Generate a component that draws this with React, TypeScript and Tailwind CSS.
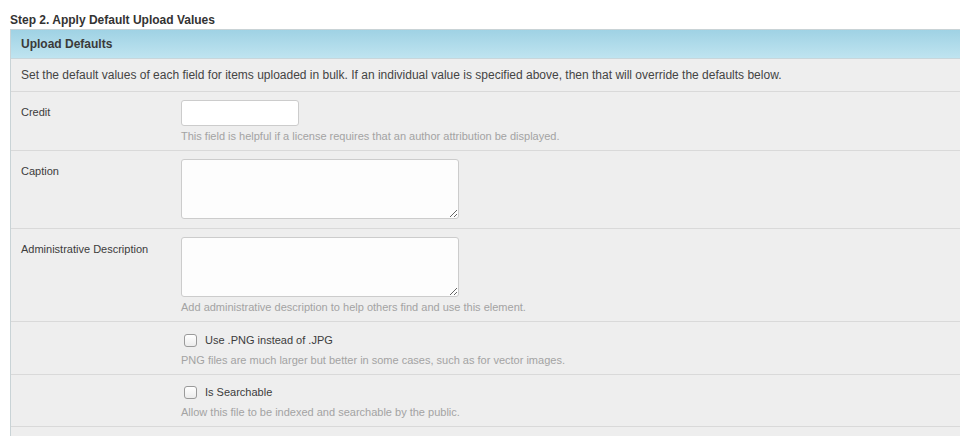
import React from 'react';

const font = { fontFamily: '"Liberation Sans", Arial, Helvetica, sans-serif' };

const Help: React.FC<{ children: React.ReactNode }> = ({ children }) => (
  <p className="mt-[2px] text-[11px] leading-[16px] text-[#a3a3a3]">{children}</p>
);

const Row: React.FC<{ label?: string; children: React.ReactNode; pt?: string; pb?: string }> = ({
  label,
  children,
  pt = 'pt-[8px]',
  pb = 'pb-[6px]',
}) => (
  <div className={`flex border-t border-[#d9d9d9] pl-[10px] ${pt} ${pb}`}>
    <div className="w-[160px] shrink-0 pt-[4px] text-[11px] leading-[16px] text-[#3c3c3c]">{label}</div>
    <div className="flex-1">{children}</div>
  </div>
);

const Check: React.FC<{ label: string }> = ({ label }) => (
  <label className="flex h-[20px] items-center gap-[8px] text-[11px] text-[#3c3c3c]">
    <input
      type="checkbox"
      className="ml-[3px] h-[13px] w-[13px] appearance-none rounded-[3px] border border-[#9a9a9a] bg-gradient-to-b from-white to-[#ececec]"
    />
    {label}
  </label>
);

export default function App() {
  return (
    <div className="h-[436px] w-[960px] overflow-hidden bg-white" style={font}>
      <h2 className="pl-[10px] pt-[12px] text-[12px] font-bold leading-[16px] text-[#333]">
        Step 2. Apply Default Upload Values
      </h2>

      <div className="ml-[10px] mt-[1px] w-[980px] border-l border-t border-[#c9d3d6] bg-[#eeeeee]">
        {/* header */}
        <div className="h-[29px] border-b border-[#c8d6db] bg-gradient-to-b from-[#9fd2e4] to-[#bfe4f0] pl-[10px] text-[12px] font-bold leading-[29px] text-[#3a3a3a]">
          Upload Defaults
        </div>

        <div className="py-[8px] pl-[10px] text-[12px] leading-[16px] text-[#444]">
          Set the default values of each field for items uploaded in bulk. If an individual value is specified above, then that will override the defaults below.
        </div>

        <Row label="Credit">
          <input
            type="text"
            className="block h-[26px] w-[118px] rounded-[3px] border border-[#cccccc] bg-white px-[6px] text-[12px]"
          />
          <Help>This field is helpful if a license requires that an author attribution be displayed.</Help>
        </Row>
        <Row label="Caption" pb="pb-[9px]">
          <textarea className="block h-[60px] w-[278px] rounded-[3px] border border-[#cccccc] bg-[#fdfdfd] text-[12px]" />
        </Row>
        <Row label="Administrative Description">
          <textarea className="block h-[60px] w-[278px] rounded-[3px] border border-[#cccccc] bg-[#fdfdfd] text-[12px]" />
          <Help>Add administrative description to help others find and use this element.</Help>
        </Row>
        <Row>
          <Check label="Use .PNG instead of .JPG" />
          <Help>PNG files are much larger but better in some cases, such as for vector images.</Help>
        </Row>
        <Row pt="pt-[7px]">
          <Check label="Is Searchable" />
          <Help>Allow this file to be indexed and searchable by the public.</Help>
        </Row>
        <div className="h-[40px] border-t border-[#d9d9d9]" />
      </div>
    </div>
  );
}
